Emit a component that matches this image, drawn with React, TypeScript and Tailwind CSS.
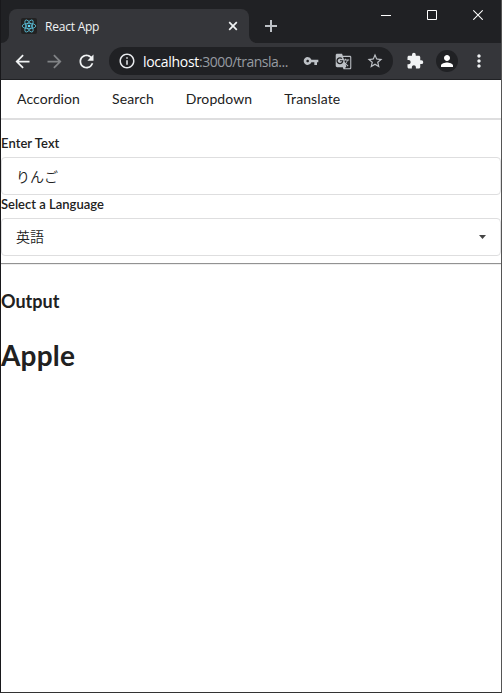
import React from "react";
import {
  MdArrowBack,
  MdArrowForward,
  MdExtension,
  MdGTranslate,
  MdInfoOutline,
  MdMoreVert,
  MdPerson,
  MdRefresh,
  MdStarBorder,
  MdVpnKey,
} from "react-icons/md";

function Slot({ children }: { children: React.ReactNode }) {
  return <div className="flex h-7 w-8 shrink-0 items-center justify-center">{children}</div>;
}

function ReactLogo() {
  return (
    <svg width="16" height="16" viewBox="-8 -8 16 16" fill="none" stroke="#5cc5e0" strokeWidth="0.8">
      <circle r="1.3" fill="#61dafb" stroke="none" />
      <ellipse rx="6.8" ry="2.7" />
      <ellipse rx="6.8" ry="2.7" transform="rotate(60)" />
      <ellipse rx="6.8" ry="2.7" transform="rotate(120)" />
    </svg>
  );
}

function TitleBar() {
  return (
    <div className="flex h-[43px] items-start bg-[#202124]">
      <div className="mt-[9px] flex h-[34px] items-end">
        <div className="h-2 w-2 bg-[#35363a]">
          <div className="h-2 w-2 rounded-br-lg bg-[#202124]" />
        </div>
        <div className="flex h-[34px] w-60 items-center rounded-t-lg bg-[#35363a] pr-[10px] pl-3">
          <div className="flex h-4 w-4 items-center justify-center rounded-[2px] bg-[#222]">
            <ReactLogo />
          </div>
          <span className="ml-2 grow pt-px text-[12px] leading-4 tracking-[-0.22px] text-[#f1f3f4]">React App</span>
          <svg width="12" height="12" viewBox="0 0 12 12" stroke="#f1f3f4" strokeWidth="1.7">
            <path d="M2.2 2.2 9.8 9.8M9.8 2.2 2.2 9.8" />
          </svg>
        </div>
        <div className="h-2 w-2 bg-[#35363a]">
          <div className="h-2 w-2 rounded-bl-lg bg-[#202124]" />
        </div>
      </div>
      <svg className="mt-5 ml-[8px]" width="12" height="12" viewBox="0 0 12 12" stroke="#bdc1c6" strokeWidth="2">
        <path d="M6 0v12M0 6h12" />
      </svg>
      <div className="grow" />
      <div className="mt-[9px] mr-[18px] flex gap-9">
        <svg width="10" height="11" viewBox="0 0 10 11" stroke="#fff">
          <path d="M0 6.5h10" />
        </svg>
        <svg width="10" height="11" viewBox="0 0 10 11" stroke="#fff" fill="none">
          <path d="M.5 1.5h9v9h-9z" />
        </svg>
        <svg width="10" height="11" viewBox="0 0 10 11" stroke="#fff" strokeWidth="1.1">
          <path d="M.3 1.3 9.7 10.7M9.7 1.3.3 10.7" />
        </svg>
      </div>
    </div>
  );
}

function Toolbar() {
  return (
    <div className="flex h-[37px] items-center border-b border-[#202124] bg-[#35363a] pl-[5px] text-[#f1f3f4]">
      <Slot><MdArrowBack size={21} /></Slot>
      <Slot><MdArrowForward size={21} color="#818386" /></Slot>
      <Slot><MdRefresh size={21} /></Slot>
      <div className="ml-[7px] flex h-7 w-[284px] items-center rounded-full bg-[#202124] pr-0.5 pl-[9px] text-[#bdc1c6]">
        <MdInfoOutline size={18} color="#e8eaed" />
        <span className="ml-[7px] grow text-[14px] whitespace-nowrap tracking-[-0.5px] text-[#969ba1]">
          <span className="tracking-[-0.3px] text-white">localhost</span>:3000/transla...
        </span>
        <Slot><MdVpnKey size={16} /></Slot>
        <Slot><MdGTranslate size={17} /></Slot>
        <Slot><MdStarBorder size={18} /></Slot>
      </div>
      <div className="ml-1.5 flex">
        <Slot><MdExtension size={18} /></Slot>
        <Slot>
          <div className="flex h-[22px] w-[22px] items-center justify-center rounded-full bg-[#202124]">
            <MdPerson size={18} color="#fff" />
          </div>
        </Slot>
        <Slot><MdMoreVert size={20} /></Slot>
      </div>
    </div>
  );
}

const field =
  "flex h-[38px] items-center justify-between rounded border border-[#dededf] px-[14px] text-[14px] leading-[17px]";

export default function App() {
  return (
    <div className="flex h-[693px] w-[502px] flex-col border-r border-b border-l border-r-[#555] border-b-[#333] border-l-[#18181b] bg-white">
      <div className="font-['Open_Sans','Noto_Sans',sans-serif]">
        <TitleBar />
        <Toolbar />
      </div>
      <div className="flex grow flex-col bg-white font-[Lato,'Noto_Sans_CJK_JP',sans-serif] text-[14px] text-[#212121]">
        <nav className="flex h-10 items-center gap-8 border-b-2 border-[#dededf] px-4 pb-px tracking-[0.1px]">
          <a>Accordion</a>
          <a>Search</a>
          <a>Dropdown</a>
          <a>Translate</a>
        </nav>
        <label className="mt-[14px] h-[23px] text-[13px] leading-[19px] font-semibold tracking-[0.05px]">Enter Text</label>
        <div className={field}>
          <span className="font-[350]">りんご</span>
        </div>
        <label className="h-[23px] text-[13px] leading-[19px] font-semibold">Select a Language</label>
        <div className={field}>
          <span className="pb-0.5 font-[350]">英語</span>
          <svg width="7" height="4" viewBox="0 0 7 4" fill="#444">
            <path d="M0 0h7L3.5 4z" />
          </svg>
        </div>
        <hr className="mt-[7px] h-0.5 border-t border-b border-t-[#929292] border-b-[#eee]" />
        <h3 className="mt-[25px] text-[18px] leading-[23px] font-bold">Output</h3>
        <h1 className="mt-6 text-[28px] leading-9 font-bold tracking-[0.2px]">Apple</h1>
      </div>
    </div>
  );
}
